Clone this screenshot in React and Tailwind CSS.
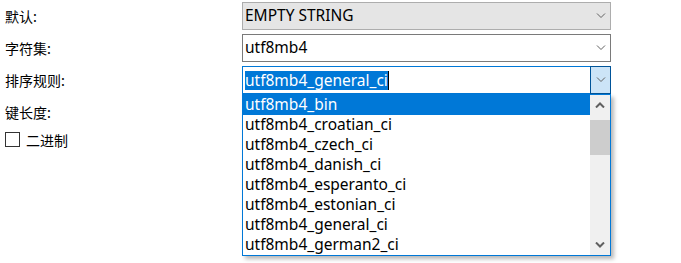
import React from "react";

const latin = "font-['Noto_Sans','Noto_Sans_CJK_SC',sans-serif]";

const items = [
  "utf8mb4_bin",
  "utf8mb4_croatian_ci",
  "utf8mb4_czech_ci",
  "utf8mb4_danish_ci",
  "utf8mb4_esperanto_ci",
  "utf8mb4_estonian_ci",
  "utf8mb4_general_ci",
  "utf8mb4_german2_ci",
];

function Chevron({ up = false, bold = false }) {
  return (
    <svg width="10" height="6" viewBox="0 0 10 6" className="block">
      <path
        d={up ? "M1 5.5 L5 1.5 L9 5.5" : "M1 0.5 L5 4.5 L9 0.5"}
        fill="none"
        stroke="#606060"
        strokeWidth={bold ? 2 : 1}
      />
    </svg>
  );
}

function Label({ children }) {
  return (
    <div className="w-[242px] pl-[5px] text-[14px] text-black leading-none">
      {children}
    </div>
  );
}

export default function App() {
  return (
    <div className="relative w-[681px] h-[263px] bg-white overflow-hidden font-['Noto_Sans_CJK_SC',sans-serif]">
      <div className="flex flex-col gap-[4px] pt-[2px]">
        <div className="flex items-center h-[28px]">
          <Label>默认:</Label>
          <div className="w-[369px] h-[28px] flex items-center justify-between bg-[#e5e5e5] border border-[#adadad] pl-[2px] pr-[4px]">
            <span className={`${latin} text-[15.5px] text-black`}>EMPTY STRING</span>
            <Chevron />
          </div>
        </div>

        <div className="flex items-center h-[28px]">
          <Label>字符集:</Label>
          <div className="w-[369px] h-[28px] flex items-center justify-between bg-white border border-[#7a7a7a] pl-[2px] pr-[4px]">
            <span className={`${latin} text-[15.5px] text-black`}>utf8mb4</span>
            <Chevron />
          </div>
        </div>

        <div className="flex items-center h-[28px]">
          <Label>排序规则:</Label>
          <div className="w-[369px] h-[28px] flex items-center justify-between bg-white border border-[#0078d7] pl-[2px]">
            <div className="flex items-center">
              <span className={`${latin} text-[15.5px] leading-[19px] bg-[#0078d7] text-white`}>
                utf8mb4_general_ci
              </span>
              <span className="w-px h-[19px] bg-black" />
            </div>
            <div className="w-[21px] h-[28px] -mr-px -my-px flex items-center justify-center bg-[#cce4f7] border border-[#005499]">
              <Chevron />
            </div>
          </div>
        </div>

        <div className="flex items-center h-[28px]">
          <Label>键长度:</Label>
        </div>
      </div>

      <div className="flex items-center gap-[6px] pl-[5px] mt-[6px]">
        <div className="w-[15px] h-[15px] border border-[#333333] bg-white" />
        <span className="text-[14px] text-black leading-none">二进制</span>
      </div>

      <div className="absolute left-[242px] top-[94px] w-[369px] h-[162px] flex bg-white border border-[#0078d7] shadow-[3px_3px_4px_rgba(0,0,0,0.28)]">
        <div className="flex-1 flex flex-col">
          {items.map((it, i) => (
            <div
              key={it}
              className={`${latin} h-[20px] flex items-center pl-[2px] text-[15.5px] ${
                i === 0 ? "bg-[#0078d7] text-white" : "text-black"
              }`}
            >
              {it}
            </div>
          ))}
        </div>
        <div className="w-[20px] flex flex-col bg-[#f0f0f0]">
          <div className="h-[20px] flex items-center justify-center">
            <Chevron up bold />
          </div>
          <div className="flex-1">
            <div className="mt-[5px] h-[35px] bg-[#cdcdcd]" />
          </div>
          <div className="h-[20px] flex items-center justify-center">
            <Chevron bold />
          </div>
        </div>
      </div>
    </div>
  );
}
